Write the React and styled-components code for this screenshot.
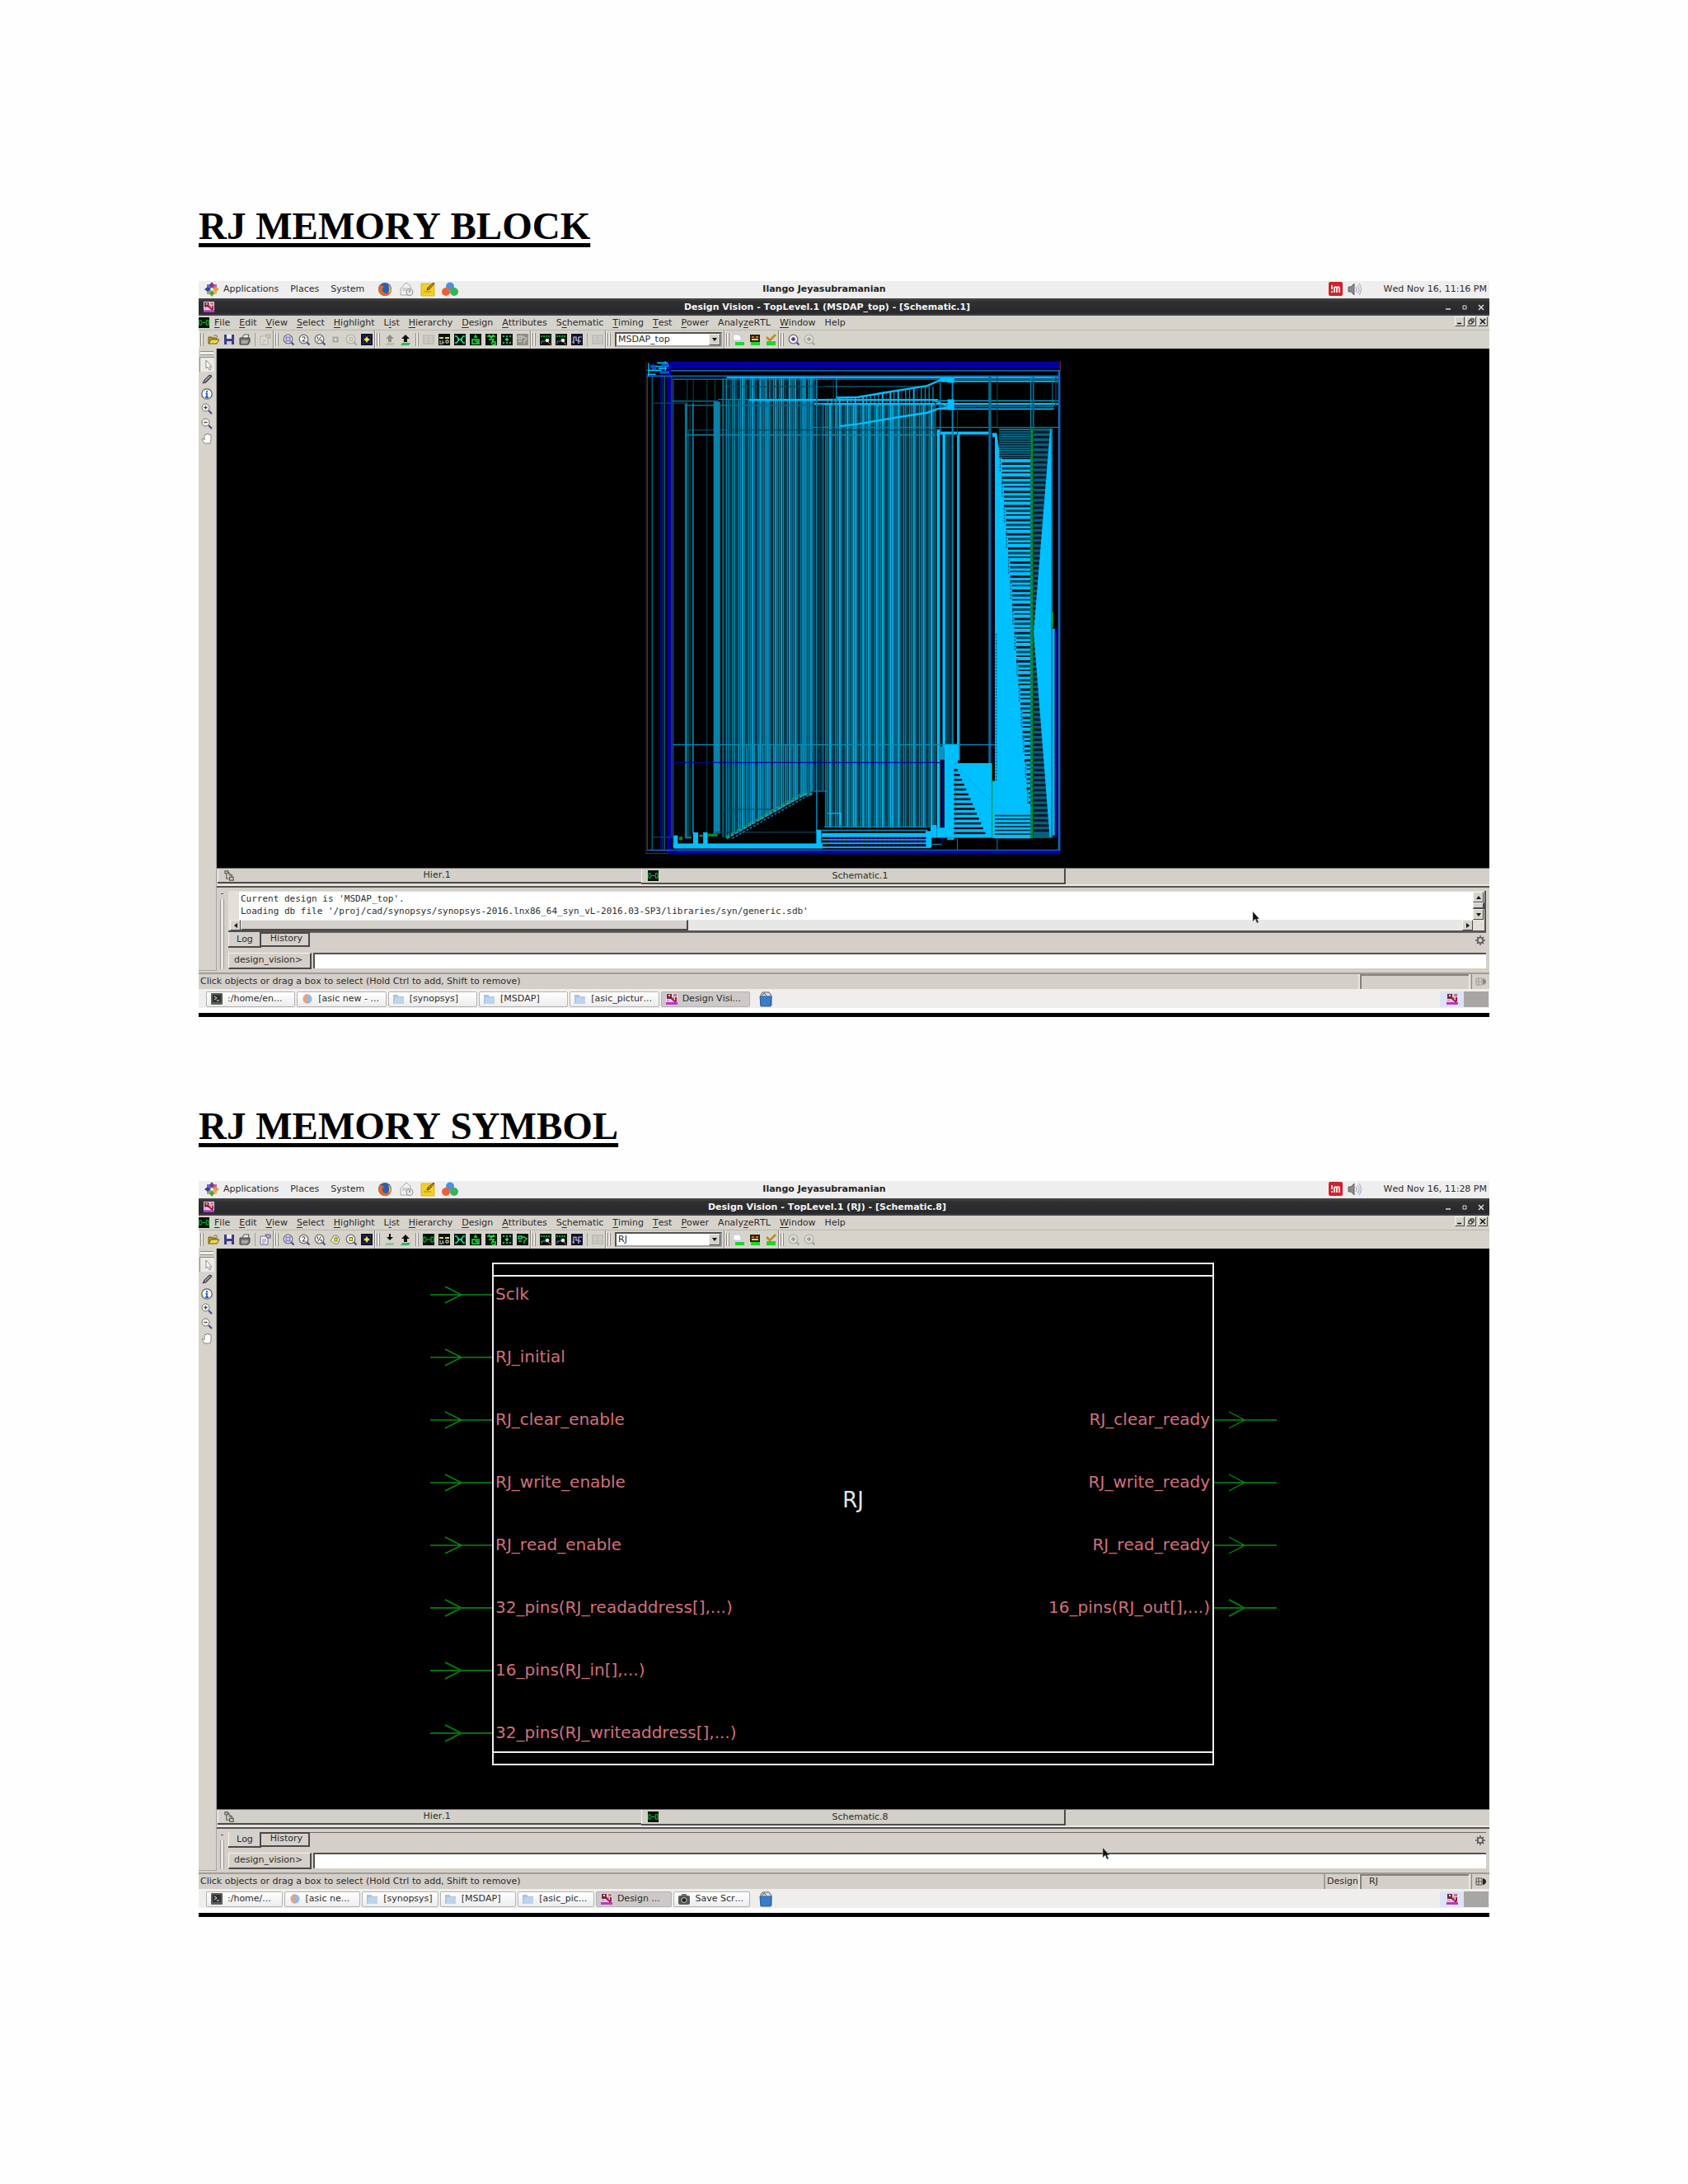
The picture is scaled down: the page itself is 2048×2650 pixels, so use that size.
import React, { useId, useState } from 'react';
import styled, { createGlobalStyle, css } from 'styled-components';

const GlobalStyle = createGlobalStyle`
  * {
    box-sizing: border-box;
  }

  body {
    margin: 0;
    background: #fefefe;
    font-kerning: none;
  }

  button, input, select {
    margin: 0;
    padding: 0;
    border: 0;
    background: none;
    color: inherit;
    font: inherit;
    font-kerning: none;
  }
`;

const Sheet = styled.main`
  padding: 246px 241px 200px;
`;

const Section = styled.section`
  margin-bottom: 104px;
`;

const Heading = styled.h1`
  margin: 0 0 39px;
  color: #000;
  font-family: "Liberation Serif", serif;
  font-size: 47px;
  font-weight: 700;
  line-height: 56px;
  text-decoration: underline;
  text-decoration-thickness: 5px;
  text-underline-offset: 5px;
`;

const Desktop = styled.div`
  position: relative;
  padding-bottom: 6px;
  border-bottom: 5px solid #000;
  color: #2c2c2c;
  font-family: "DejaVu Sans", sans-serif;
  font-size: 11px;
  line-height: 14px;
`;

const Svg = styled.svg`
  display: block;
  flex: none;
`;

const Panel = styled.header`
  display: grid;
  grid-template-columns: 1fr auto 1fr;
  align-items: center;
  height: 21px;
  padding-bottom: 2px;
  background: #efeeef;
`;

const PanelSide = styled.div`
  display: flex;
  align-items: center;
  justify-content: ${(props) => (props.$end ? 'flex-end' : 'flex-start')};
  gap: ${(props) => (props.$end ? '6px' : '8px')};
  padding: 0 3px 0 7px;
`;

const PanelMenus = styled.nav`
  display: flex;
  gap: 14px;
  margin: 0 8px 0 -3px;
`;

const UserName = styled.strong`
  padding-right: 48px;
  color: #222;
`;

const Clock = styled.time`
  margin-left: 20px;
`;

const TitleBar = styled.div`
  display: flex;
  align-items: center;
  height: 21px;
  padding-left: 6px;
  background: linear-gradient(#4a4a4a, #303031 20%, #29292b 85%, #454b50);
  color: #f4f4f4;
`;

const WindowTitle = styled.h2`
  flex: 1;
  margin: 0;
  font-size: 11px;
  text-align: center;
`;

const WindowButton = styled.button`
  display: grid;
  place-items: center;
  width: 20px;
  height: 18px;
`;

const MenuBar = styled.nav`
  display: flex;
  align-items: center;
  gap: 11px;
  height: 18px;
  padding-right: 2px;
  border-bottom: 1px solid #b9b6af;
  background: #d6d3cb;
`;

const MenuIcon = styled.span`
  margin-right: -5px;
`;

const MenuItem = styled.button`
  white-space: nowrap;
`;

const Mnemonic = styled.span`
  text-decoration: underline;
  text-underline-offset: 2px;
`;

const ChildButtons = styled.div`
  display: flex;
  gap: 2px;
  margin: 0 0 4px auto;
`;

const raised = css`
  border: 1px solid;
  border-color: #f4f3f0 #4c4a48 #4c4a48 #f4f3f0;
`;

const ChildButton = styled.button`
  ${raised}
  display: grid;
  place-items: center;
  width: 12px;
  height: 12px;
  background: #d6d3cb;
`;

const ToolBar = styled.div`
  display: flex;
  height: 22px;
  background: #d6d3cb;
`;

const ToolGroup = styled.div`
  display: flex;
  align-items: center;
  gap: 5px;
  padding: 0 2px;
  border-right: 1px solid #86847f;
  box-shadow: inset 1px 0 #f2f0ec;

  &:last-child {
    border-right: 0;
  }
`;

const Grip = styled.span`
  width: 4px;
  height: 16px;
  border: solid #8e8c87;
  border-width: 0 1px;
  background: #f1efeb;
`;

const Divider = styled.span`
  width: 1px;
  height: 16px;
  background: #a19f9a;
`;

const ToolButton = styled.button`
  display: block;
  opacity: ${(props) => (props.disabled ? 0.35 : 1)};
  filter: ${(props) => (props.disabled ? 'grayscale(1)' : 'none')};
`;

const Combo = styled.div`
  display: grid;
  grid-template-columns: 1fr 14px;
  align-items: stretch;
  width: 130px;
  height: 18px;
  border: 2px solid;
  border-color: #55534f #a3a19c #a3a19c #55534f;
  background: #fff;
`;

const ComboSelect = styled.select`
  grid-area: 1 / 1 / 2 / 3;
  appearance: none;
  padding-left: 2px;
  line-height: 14px;
`;

const ComboArrow = styled.span`
  ${raised}
  grid-area: 1 / 2 / 2 / 3;
  display: grid;
  place-items: center;
  background: #d6d3cb;
  pointer-events: none;
`;

const Workspace = styled.div`
  display: grid;
  grid-template-columns: 22px minmax(0, 1fr);
  background: #d4d0c9;
`;

const SideTools = styled.div`
  display: flex;
  flex-direction: column;
  align-items: center;
  margin-bottom: 2px;
  padding: 3px 1px 0 0;
  border-right: 1px solid #a8a6a0;
  border-bottom: 1px solid #a8a6a0;
  background: #d5d3ca;
`;

const SideGrip = styled.span`
  width: 16px;
  height: 5px;
  margin-bottom: 2px;
  border: solid #8e8c87;
  border-width: 1px 0;
  background: #f1efeb;
`;

const SideButton = styled.button`
  display: grid;
  place-items: center;
  width: 18px;
  height: 18px;
  ${(props) => props.$active && css`
    border: solid #8b8984;
    border-width: 1px 0 0 1px;
    background: #eceae7;
  `}
`;

const Canvas = styled.svg`
  display: block;
  width: 100%;
  height: auto;
  background: #000;
`;

const PinName = styled.text`
  fill: #d4707c;
  font-family: "DejaVu Sans", sans-serif;
  font-size: 20px;
`;

const BlockName = styled.text`
  fill: #e4e4e4;
  font-family: "DejaVu Sans", sans-serif;
  font-size: 26px;
`;

const ViewTabs = styled.div`
  display: grid;
  grid-template-columns: repeat(3, 1fr);
  align-items: start;
  height: 24px;
  padding-left: 1px;
  border-top: 1px solid #6c6a68;
  border-bottom: 2px solid #55534f;
  background: #d2d0c8;
  box-shadow: inset 0 -2px #eceae6;
`;

const ViewTab = styled.button`
  display: flex;
  align-items: center;
  height: ${(props) => (props.$active ? '19px' : '18px')};
  padding: 0 3px 0 8px;
  border: solid #4f4d4b;
  border-width: 0 ${(props) => (props.$active ? '2px' : '0')} 2px 0;
  box-shadow: inset 1px 0 #f4f3f0;
`;

const ViewTabLabel = styled.span`
  flex: 1;
  text-align: center;
`;

const Console = styled.div`
  display: grid;
  grid-template-columns: 14px minmax(0, 1fr);
  padding: 4px 4px 4px 0;
`;

const ConsoleGrip = styled.div`
  width: 5px;
  margin: 10px 0 0 4px;
  border: solid #9b9893;
  border-width: 0 1px;
  background: #ebe8e4;
  box-shadow: 0 -7px 0 -1px #d4d0c9, 0 -8px 0 -1px #55534f;
`;

const LogBox = styled.div`
  display: grid;
  grid-template-columns: minmax(0, 1fr) 14px;
  height: 50px;
  padding-top: 1px;
  border-right: 2px solid #55534f;
  border-bottom: 2px solid #55534f;
  background: #e3dfda;
`;

const LogText = styled.pre`
  height: 34px;
  margin: 0 0 0 13px;
  padding: 1px 2px;
  overflow: hidden;
  background: #fff;
  font-family: "DejaVu Sans Mono", monospace;
  font-size: 11px;
  line-height: 15px;
`;

const ScrollColumn = styled.div`
  display: grid;
  grid-template-rows: 13px 1fr 13px;
  height: 34px;
  background: #d6d3cb;
`;

const ScrollRow = styled.div`
  display: flex;
  height: 13px;
  margin-left: 2px;
  background: #e7e7e5;
`;

const ScrollArrow = styled.button`
  ${raised}
  display: grid;
  place-items: center;
  width: 13px;
  height: 13px;
  background: #d6d3cb;
`;

const ScrollThumb = styled.div`
  ${raised}
  width: ${(props) => props.$width || '100%'};
  margin-right: auto;
  border-right-width: 2px;
  border-bottom-width: 2px;
  background: #d4d0cb;
`;

const LogTabs = styled.div`
  display: flex;
  align-items: flex-start;
  height: 19px;
  margin-bottom: 6px;
  box-shadow: inset 0 1px #6c6a68;
`;

const LogTab = styled.button`
  height: ${(props) => (props.$active ? '19px' : '18px')};
  padding: 0 ${(props) => (props.$active ? '8px' : '7px')} 0 ${(props) => (props.$active ? '10px' : '11px')};
  border: solid #4c4a48;
  border-width: 0 2px 2px 0;
  background: #d4d0cb;
  box-shadow: ${(props) => (props.$active ? 'inset 1px 0 #f4f3f0' : 'inset 0 2px #4c4a48')};
`;

const GearButton = styled.button`
  margin: 3px 0 0 auto;
`;

const CommandRow = styled.div`
  display: flex;
  height: 20px;
`;

const CommandLabel = styled.label`
  ${raised}
  padding: 1px 9px 0 6px;
  border-right-width: 2px;
  border-bottom-width: 2px;
`;

const CommandInput = styled.input`
  flex: 1;
  min-width: 0;
  height: 19px;
  margin-left: 2px;
  padding-left: 4px;
  border: solid #55534f;
  border-width: 2px 0 0 2px;
  background: #fff;
`;

const StatusBar = styled.footer`
  display: flex;
  height: 20px;
  border-top: 2px solid #a09d98;
  background: #d4cfc9;
`;

const StatusText = styled.span`
  flex: 1;
  padding: 2px;
`;

const StatusLabel = styled.span`
  padding: 2px;
  border-left: 2px solid #a09d98;
`;

const StatusValue = styled.output`
  width: 132px;
  margin-right: 3px;
  padding: 0 9px;
  border: solid #85827e;
  border-width: 2px 0 0 2px;
  box-shadow: 1px 0 #f4f3f0, -2px 0 #e9e6e2;
`;

const StatusCorner = styled.span`
  display: grid;
  place-items: center;
  width: 22px;
  border-left: 1px solid #85827e;
`;

const TaskBar = styled.div`
  display: flex;
  align-items: center;
  height: 23px;
  padding: 1px 1px 0 9px;
  background: #efeeed;
`;

const TaskList = styled.div`
  display: flex;
  flex: 0 1 660px;
  gap: 2px;
  margin-right: 11px;
`;

const TaskButton = styled.button`
  display: flex;
  flex: 1 1 0;
  align-items: center;
  gap: 6px;
  min-width: 0;
  height: 19px;
  padding-left: 5px;
  border: 1px solid #b5b3b1;
  border-radius: 2px;
  background: ${(props) => (props.$active ? '#cdc9c8' : 'linear-gradient(#fff, #ececec)')};
  white-space: nowrap;
`;

const Pager = styled.div`
  display: grid;
  grid-template-columns: 29px 30px;
  height: 19px;
  margin-left: auto;
  background: #a8a6a5;
`;

const PagerDesk = styled.button`
  display: grid;
  place-items: center;
  background: #dbe4f4;
`;

const Pointer = styled.span`
  position: absolute;
  left: ${(props) => props.$left};
  top: ${(props) => props.$top};
  pointer-events: none;
`;

const GREEN = '#0fd03c';

const lens = (
  <>
    <circle cx="6.5" cy="6.5" r="5.3" fill="#f6f6f4" stroke="#6d6d75" strokeWidth="1.3" />
    <path d="M10.5 10.5 13.5 13.5" stroke="#4a46a0" strokeWidth="2" />
  </>
);

const board = <rect width="14" height="14" fill="#07120a" />;

// toolbar glyphs, all drawn on a 14 x 14 grid
const glyphs = {
  open: (
    <>
      <path d="M1 12V4h4l1 1h5v2" fill="#b79a2a" stroke="#6e5b12" />
      <path d="M1 12 4 7h10l-3 5z" fill="#ecd94f" stroke="#6e5b12" />
      <path d="M7 3q3-3 5 1" fill="none" stroke="#3d7a3d" />
    </>
  ),
  save: (
    <>
      <path d="M1 1h12v12H1z" fill="#3d3d86" />
      <path d="M4 1h6v5H4z" fill="#e8e8f4" />
      <path d="M4 9h6v4H4z" fill="#c9c9d8" />
    </>
  ),
  print: (
    <>
      <path d="M4 5 6 1h6l-1 4" fill="#eee" stroke="#555" />
      <path d="M1 5h12v5l-2 3H1z" fill="#777" stroke="#3e3e3e" />
      <path d="M3 9h8M3 11h7" stroke="#ddd" />
    </>
  ),
  props: (
    <>
      <path d="M1 3h9v10H1z" fill="#f1f1f6" stroke="#6a6a90" />
      <path d="M3 7h5M3 9h5M3 11h3" stroke="#8a8aae" />
      <path d="M7 1h6v4H9z" fill="#b9b9cf" stroke="#55557c" />
    </>
  ),
  zoomFull: (
    <>
      {lens}
      <rect x="4" y="4" width="5" height="5" fill="#c3c3f4" stroke="#5a55c8" />
    </>
  ),
  zoomTwo: (
    <>
      {lens}
      <path d="M5 5q0-1.500 1.500-1.500T8 5q0 1-3 4h3.500" fill="none" stroke="#333" />
    </>
  ),
  zoomHalf: (
    <>
      {lens}
      <path d="M4.500 3.500v3M8.500 3.500l-4 6M7.500 7.500h1.500v2" fill="none" stroke="#333" />
    </>
  ),
  zoomPan: (
    <>
      <path d="M3 6 5 2l5 1 2 4-2 5H6L1 8z" fill="#f6f6d8" stroke="#777" />
      <rect x="6" y="5" width="3" height="4" fill="#ece34b" stroke="#77731d" />
    </>
  ),
  zoomPanOff: <rect x="4.500" y="4.500" width="5" height="5" fill="#eee" stroke="#555" strokeWidth="2" />,
  zoomSelected: (
    <>
      {lens}
      <rect x="5" y="4.500" width="3.500" height="4" fill="#ece34b" stroke="#77731d" />
    </>
  ),
  highlight: (
    <>
      <rect width="14" height="14" fill="#11112e" />
      <path d="M2 3h10M2 11h10M3 2v10M11 2v10" stroke="#5454a0" strokeDasharray="1 2" />
      <path d="m7 3 1.500 2.500L11 7 8.500 8.500 7 11 5.500 8.500 3 7l2.500-1.500z" fill="#f5ee2a" />
    </>
  ),
  push: (
    <>
      <path d="M3 11h10l-2 3H1z" fill="#8fc79a" />
      <path d="M7 8 3 4h3V0h2v4h3z" fill="#101010" />
    </>
  ),
  pop: (
    <>
      <path d="M3 11h10l-2 3H1z" fill="#35b455" />
      <path d="M7 1 12 6H9v4H5V6H2z" fill="#101010" />
    </>
  ),
  gate: (
    <>
      {board}
      <path d="M1 4h2q3 3 0 6H1zM5 7h4M10 4h3v6h-3z" fill="none" stroke={GREEN} />
    </>
  ),
  bus: (
    <>
      {board}
      <path d="M1 4h5v2H1zM8 4h5v2H8z" fill="#f1d64a" />
      <path d="M2 8v3M5 8v3h2M9 8h3v3H9zM1 12h4" fill="none" stroke="#d9e8dc" />
    </>
  ),
  cross: (
    <>
      {board}
      <path d="M1 3h2l3 4-3 4H1M13 3h-2L8 7l3 4h2M4 7h6" fill="none" stroke="#29e0a0" strokeWidth="1.400" />
    </>
  ),
  fanIn: (
    <>
      {board}
      <path d="M7 1v3M5 4h4M3 7h8v5H3zM6 9h3v3" fill="none" stroke="#18e838" strokeWidth="1.500" />
    </>
  ),
  fanOut: (
    <>
      {board}
      <path d="M2 3h10M4 1l3 4 3-4M4 7h6l-3 5M9 10h3v3H8" fill="none" stroke="#18e838" strokeWidth="1.500" />
    </>
  ),
  path: (
    <>
      {board}
      <path d="M2 3h2M6 3h2M10 3h2M7 5v4M5 7h4M2 11h2M6 11h2M10 11h2" stroke="#4ae08a" strokeWidth="1.300" />
    </>
  ),
  tree: (
    <>
      {board}
      <path d="M2 3h4v3H2zM2 9h4M6 4h3l3 2-3 3v3" fill="none" stroke="#28d060" strokeWidth="1.300" />
    </>
  ),
  timing: (
    <>
      {board}
      <path d="M1 3h12" stroke={GREEN} strokeWidth="1.500" strokeDasharray="2 1" />
      <path d="M2 12V9h4l2-2" fill="none" stroke="#5c7be0" />
      <circle cx="9" cy="8" r="2.300" fill="#dfe9f4" />
      <path d="m10 10 3 3" stroke="#d87878" />
    </>
  ),
  wave: (
    <>
      <rect width="14" height="14" fill="#11112e" />
      <path d="M1 10h2V4h3v4h3V4h4M3 12V7M9 12V9h3" fill="none" stroke="#c9c9ea" strokeWidth="1.200" />
    </>
  ),
  list: (
    <>
      <path d="M0 1h14v12H0z" fill="#999" />
      <path d="M2 4h4M8 4h4M2 7h4M8 7h4M2 10h4M8 10h4" stroke="#eee" />
    </>
  ),
  newDesign: (
    <>
      <path d="M0 1h7l2 3v4H0z" fill="#fff" stroke="#c3bff0" />
      <path d="M2 10h11v4H2z" fill="#1fd52f" />
    </>
  ),
  linkDesign: (
    <>
      <path d="M1 1h12v9H1z" fill="#25250d" />
      <path d="M3 3h3v2H3zM8 3h3v2H8z" fill="#e7642b" />
      <path d="M3 7h8" stroke="#e3d33c" strokeWidth="2" />
      <path d="M2 10h11v4H2z" fill="#1fd52f" />
    </>
  ),
  checkDesign: (
    <>
      <path d="m2 4 4 4 7-7" fill="none" stroke="#c08b15" strokeWidth="2.500" />
      <path d="M2 9h11v5H2z" fill="#1fd52f" />
    </>
  ),
  back: (
    <>
      {lens}
      <path d="M4 6.500h5M6.500 4v5" stroke="#5c1e9e" strokeWidth="2" />
    </>
  ),
  arrow: <path d="M5 1v10l2-2 2 4 2-1-2-3h3z" fill="#fff" stroke="#8d8d8d" />,
  pencil: (
    <>
      <path d="M2 12 4 8l6-6 3 1-1 2-6 6z" fill="#71717f" stroke="#3f3f4a" />
      <path d="M5 9 10 4" stroke="#b5b5cc" />
    </>
  ),
  info: (
    <>
      <circle cx="7" cy="7" r="6.200" fill="#fbfcff" stroke="#5b6068" strokeWidth="1.300" />
      <path d="M7 3v2M5.500 6.500H7V11M5 11h4" fill="none" stroke="#1d66dd" strokeWidth="1.800" />
    </>
  ),
  zoomIn: (
    <>
      <circle cx="5.500" cy="5.500" r="4.500" fill="#f0f0ec" stroke="#74747a" />
      <path d="M3.500 5.500h4M5.500 3.500v4" stroke="#444" strokeWidth="1.300" />
      <path d="m9 9 4 4" stroke="#4a46a0" strokeWidth="2" />
    </>
  ),
  zoomOut: (
    <>
      <circle cx="5.500" cy="5.500" r="4.500" fill="#f0f0ec" stroke="#74747a" />
      <path d="M3.500 5.500h4" stroke="#444" strokeWidth="1.300" />
      <path d="m9 9 4 4" stroke="#4a46a0" strokeWidth="2" />
    </>
  ),
  hand: (
    <path
      d="M4 13 1 8l1-1 2 2V3l1-1 1 1 1-2 1 1 1-1 1 2 1-1 1 1v6l-1 4z"
      fill="#fff"
      stroke="#8a8a8a"
    />
  ),
  terminal: (
    <>
      <rect width="14" height="14" rx="1" fill="#5a5d5a" />
      <rect x="2" y="2" width="10" height="9" fill="#2e332f" />
      <path d="m4 4 3 2-3 2M7 9h3" fill="none" stroke="#e5e5e5" />
    </>
  ),
  browser: (
    <>
      <circle cx="7" cy="7" r="5.500" fill="#8fbbe0" />
      <path d="M6 1Q1 3 2 9q2 5 7 3-4-1-3-5 0-3 2-5z" fill="#eba07c" />
    </>
  ),
  folder: (
    <>
      <path d="M0 2h6v2h7v9H0z" fill="#a8c5e2" />
      <path d="M2 5h11v8H1z" fill="#bcd4ec" />
    </>
  ),
  designVision: (
    <>
      <rect width="14" height="14" fill="#f0cde4" />
      <path d="M1 1h6v6H1z" fill="#6d2c40" />
      <path d="M3 2h2v2H3z" fill="#f4dfe4" />
      <path d="M9 1h4v3H9zM7 5h3v2H7z" fill="#b9798c" />
      <path d="m6 6 6 5M12 5v5" fill="none" stroke="#a01838" strokeWidth="2" />
      <path d="M1 8h3v2H1z" fill="#d9a0cf" />
      <path d="M0 11h14v3H0z" fill="#b53ac4" />
    </>
  ),
  camera: (
    <>
      <path d="M4 1h6v3H4z" fill="#777" />
      <rect y="3" width="14" height="11" rx="2" fill="#555a55" />
      <circle cx="7" cy="8.500" r="3" fill="#222" stroke="#c2c2c2" />
    </>
  ),
  hierarchy: (
    <path
      d="M1 1h4v3H1zM3 4v7h3M6 6h4v3M7 9h5v4H7zM5 2l3 3"
      fill="none"
      stroke="#55534f"
      strokeWidth="1.200"
    />
  ),
  gear: (
    <>
      <circle cx="7" cy="7" r="3.200" fill="none" stroke="#55555a" strokeWidth="1.600" />
      <path
        d="M7 1v2M7 11v2M1 7h2M11 7h2M3 3l1.500 1.500M9.500 9.500 11 11M3 11l1.500-1.500M9.500 4.500 11 3"
        stroke="#55555a"
        strokeWidth="1.500"
      />
    </>
  ),
};

function Glyph({ name, size = 14 }) {
  return (
    <Svg width={size} height={size} viewBox="0 0 14 14" aria-hidden="true">
      {glyphs[name]}
    </Svg>
  );
}

function Triangle({ d }) {
  return (
    <Svg width="6" height="6" viewBox="0 0 6 6" aria-hidden="true">
      <path d={d} fill="#111" />
    </Svg>
  );
}

function DistroLogo() {
  const petals = ['#9b2d8f', '#e0a42a', '#5b9c34', '#3a3f9c'];
  return (
    <Svg width="18" height="18" viewBox="0 0 18 18" aria-hidden="true">
      {petals.map((fill, i) => (
        <g key={fill} transform={`rotate(${i * 90} 9 9)`}>
          <path d="M9 8 6 4l3-4 3 4z" fill={fill} />
          <path d="M10 8V3h5v5z" fill={fill} opacity="0.7" />
        </g>
      ))}
      <circle cx="9" cy="9" r="1.500" fill="#fff" />
    </Svg>
  );
}

function Launchers() {
  return (
    <>
      <Svg width="18" height="18" viewBox="0 0 18 18" aria-hidden="true">
        <circle cx="9" cy="9" r="8" fill="#2b5fae" />
        <path d="M3 3Q0 8 2 12q3 6 9 5 6-2 6-8-2 5-7 5-5-1-4-6 1-2 3-2Q5 5 3 3z" fill="#e8641f" />
        <path d="M13 3q5 4 3 9l-3 2q2-5 0-11z" fill="#f2b233" />
      </Svg>
      <Svg width="18" height="18" viewBox="0 0 18 18" aria-hidden="true">
        <path d="M2 8 9 1l5 4v11H2z" fill="#f0f0f0" stroke="#a8a8a8" />
        <path d="M4 8h8M4 10h5" stroke="#b3b3b3" />
        <circle cx="13" cy="12.500" r="4" fill="#ececf0" stroke="#8a8a92" />
        <path d="M13 10v3" stroke="#55555a" />
      </Svg>
      <Svg width="18" height="18" viewBox="0 0 18 18" aria-hidden="true">
        <path d="M1 2h16v15H1z" fill="#f2cf28" stroke="#d8b31a" />
        <path d="M4 12h9" stroke="#a98b13" />
        <path d="m8 10 1-3 7-6 1 1-6 7z" fill="#b98a4a" stroke="#5d4420" />
      </Svg>
      <Svg width="20" height="18" viewBox="0 0 20 18" aria-hidden="true">
        <circle cx="10" cy="5.500" r="5" fill="#4d8fe0" />
        <circle cx="5" cy="12" r="5" fill="#ee6034" />
        <circle cx="15" cy="12" r="5" fill="#35b45a" />
      </Svg>
    </>
  );
}

function TrayIcons() {
  return (
    <>
      <Svg width="17" height="17" viewBox="0 0 17 17" aria-hidden="true">
        <rect width="17" height="17" rx="2" fill="#d3202a" />
        <path d="M4 4v5M4 11v2M7 13V6M7 7q3-2 3 1v5M10 7q3-2 3 1v5" fill="none" stroke="#fff" strokeWidth="1.700" />
      </Svg>
      <Svg width="18" height="16" viewBox="0 0 18 16" aria-hidden="true">
        <path d="M1 5h3l4-4v14l-4-4H1z" fill="#8b8b8b" stroke="#666" />
        <path d="M10 5q2 3 0 6M12 3q4 5 0 10M14 1q5 7 0 14" fill="none" stroke="#a7b3cc" strokeWidth="1.200" />
      </Svg>
    </>
  );
}

const CYAN = '#00bfff';
const MID = '#0785ad';
const DIM = '#06465a';
const NAVY = '#0000a4';
const BLUE = '#1263c4';

// [x, y, width, height, fill]
const frameBars = [
  [40, 45, 3, 1465, '#4a2414'], [44, 90, 3, 1410, '#1c5561'], [61, 90, 4, 1410, '#0c6285'],
  [92, 60, 4, 1440, NAVY], [98, 60, 3, 1440, '#10306a'], [105, 90, 4, 1410, '#0c6285'],
  [116, 60, 14, 1445, NAVY], [130, 90, 5, 1370, '#3a2488'], [137, 95, 3, 1395, BLUE],
  [125, 45, 1403, 21, NAVY], [130, 71, 1392, 4, BLUE], [44, 87, 1476, 4, BLUE],
  [1520, 70, 8, 1432, BLUE], [1527, 45, 3, 30, '#7a3414'],
  [45, 1497, 1483, 4, BLUE], [120, 1501, 1408, 10, NAVY], [40, 1507, 80, 3, '#5a2a14'],
];

const railBars = [
  [330, 91, 1190, 5, CYAN], [140, 97, 1380, 3, MID], [1100, 102, 420, 5, CYAN],
  [320, 119, 740, 3, DIM], [135, 162, 165, 3, MID], [62, 168, 120, 3, DIM],
  [300, 157, 110, 3, MID], [410, 157, 680, 6, CYAN], [1090, 161, 430, 3, CYAN],
  [180, 174, 460, 4, '#0a6888'], [645, 169, 875, 6, CYAN], [1090, 178, 415, 3, MID],
  [1095, 185, 410, 4, CYAN], [635, 240, 885, 3, MID], [190, 248, 895, 3, DIM],
  [190, 262, 895, 4, MID], [1085, 254, 195, 9, CYAN],
  [187, 95, 3, 1365, DIM], [209, 95, 3, 80, DIM], [180, 170, 9, 1290, '#087295'],
  [192, 250, 2, 1210, MID], [197, 170, 3, 1290, DIM], [207, 170, 5, 1280, MID],
  [258, 95, 3, 1355, DIM], [287, 95, 3, 70, DIM], [283, 165, 24, 1285, '#0782a8'],
  [315, 95, 4, 1365, MID], [321, 95, 3, 1365, DIM], [327, 95, 5, 1365, MID],
  [634, 240, 3, 1085, MID], [651, 95, 5, 1345, '#0c7aa0'], [660, 172, 4, 1150, DIM], [667, 172, 4, 1150, DIM],
  [674, 172, 4, 1150, MID], [712, 95, 3, 150, DIM], [722, 95, 4, 150, MID],
  [1078, 165, 4, 1270, DIM], [1085, 248, 11, 1185, CYAN], [1105, 255, 10, 945, CYAN],
  [1095, 91, 4, 170, MID], [1118, 262, 9, 925, '#06465a'], [1129, 262, 4, 925, DIM],
  [1138, 91, 6, 1095, MID], [1157, 262, 10, 970, '#05b0eb'], [1157, 175, 3, 90, DIM],
  [1270, 91, 10, 1150, '#066b8e'], [1279, 262, 4, 980, NAVY], [1300, 91, 3, 155, DIM],
  [1420, 91, 4, 155, MID], [1428, 91, 6, 155, '#0c6285'], [1498, 91, 3, 95, MID], [1510, 91, 4, 90, DIM],
  [138, 1184, 1155, 3, '#078fb9'], [138, 1237, 965, 3, NAVY], [320, 1376, 170, 3, DIM],
  [290, 1444, 362, 3, DIM], [640, 1322, 52, 3, MID], [692, 1388, 50, 3, CYAN], [737, 1388, 4, 36, CYAN],
  [1103, 1238, 3, 242, NAVY], [1157, 1465, 3, 32, MID], [1300, 1465, 3, 32, MID],
];

const footBars = [
  [60, 1459, 80, 3, DIM], [140, 1455, 15, 38, CYAN], [210, 1446, 18, 45, CYAN], [246, 1446, 16, 45, CYAN],
  [140, 1479, 535, 15, CYAN], [160, 1459, 12, 10, '#078d2a'], [232, 1453, 14, 6, '#078d2a'],
  [262, 1450, 36, 8, '#078d2a'], [180, 1459, 24, 5, MID], [652, 1438, 18, 50, CYAN],
  [680, 1428, 370, 3, MID], [672, 1438, 380, 4, '#0d90bd'], [672, 1448, 400, 12, CYAN],
  [672, 1466, 390, 4, '#21a8d8'], [672, 1476, 390, 5, '#21a8d8'], [672, 1488, 390, 5, '#21a8d8'],
  [1044, 1442, 22, 48, CYAN], [1062, 1424, 22, 38, CYAN], [1084, 1432, 30, 30, CYAN],
  [1066, 1480, 36, 3, MID], [1092, 1190, 20, 40, '#0d90bd'],
  [1112, 1184, 48, 278, CYAN], [1122, 1462, 24, 6, CYAN], [1157, 1240, 126, 222, CYAN],
  [1281, 1240, 3, 222, '#078d2a'], [1284, 1293, 12, 170, CYAN],
];

// brightness of the wires from left to right, repeated over a bundle
const WIRE_PATTERN = 'mdmmdmmbmdmmbmdmbmmbbmdmbmmbmdmbmmbmdmbbmmb';
const wireFill = { b: '#05aee6', m: '#078cb6', d: DIM };

function wires(from, to, step, offset = 0) {
  const out = [];
  for (let x = from, i = offset; x < to; x += step, i += 1) {
    out.push({ x, shade: WIRE_PATTERN[i % WIRE_PATTERN.length], i });
  }
  return out;
}

const slopeAt = (x) => 1462 - (x - 330) * 0.45;

function TopLevelSchematic() {
  return (
    <Canvas viewBox="0 0 1544 630" role="img" aria-label="MSDAP_top schematic">
      <g transform="translate(507 -3) scale(0.338 0.408)">
        {frameBars.map(([x, y, w, h, fill], i) => (
          <rect key={i} x={x} y={y} width={w} height={h} fill={fill} />
        ))}
        <path d="M46 72h50M46 84h30M50 50v40M66 55v20M72 60h50M80 50h40M85 66h30M110 45v30" stroke={CYAN} strokeWidth="4" />
        <path d="M56 60h20M90 78h34M64 66h14M96 56h28" stroke="#0a50e0" strokeWidth="8" />

        <path d="M335 97H650V1320L335 1460Z" fill="#02202b" />
        <rect x="656" y="172" width="26" height="1150" fill="#021820" />
        <rect x="682" y="172" width="400" height="1260" fill="#02222d" />
        <rect x="1112" y="262" width="30" height="922" fill="#021c26" />

        {wires(336, 650, 7).map(({ x, shade, i }) => (
          <rect key={x} x={x} y={i % 5 ? 95 : 160} width={shade === 'b' ? 5 : 4} height={slopeAt(x) - (i % 5 ? 95 : 160)} fill={wireFill[shade]} />
        ))}
        {wires(372, 610, 14, 3).map(({ x }) => (
          <rect key={x} x={x} y="1185" width="4" height={slopeAt(x) - 1185} fill="#0993bf" />
        ))}
        {wires(684, 1078, 7, 5).map(({ x, shade, i }) => (
          <rect key={x} x={x} y={i % 2 ? 172 : 122} width={shade === 'b' ? 6 : 4} height={i % 2 ? 1260 : 1310} fill={wireFill[shade]} />
        ))}
        <path d="M684 122H1050L770 155H684Z" fill="#000" />
        <path d="M684 119H1060" stroke={DIM} strokeWidth="3" />

        {railBars.map(([x, y, w, h, fill], i) => (
          <rect key={i} x={x} y={y} width={w} height={h} fill={fill} />
        ))}
        <path d="M725 153 800 152 900 138 1050 118 1100 100 1145 98" fill="none" stroke={CYAN} strokeWidth="6" />
        <path d="M735 238 800 232 940 212 1050 198 1090 186 1145 182" fill="none" stroke={CYAN} strokeWidth="6" />
        <path d="M1085 92 1145 105M1070 160 1140 185M1125 95h20v12h-20zM1125 160h20v28h-20z" stroke={CYAN} strokeWidth="4" fill={CYAN} />

        <path d="M326 1460 600 1330H638" fill="none" stroke="#0aa04a" strokeWidth="4" strokeDasharray="16 6" />
        <path d="M330 1464 606 1334H638" fill="none" stroke="#08a6dc" strokeWidth="5" strokeDasharray="12 5" />
        <path d="M350 1464 632 1332" fill="none" stroke={MID} strokeWidth="4" strokeDasharray="8 6" />

        {footBars.map(([x, y, w, h, fill], i) => (
          <rect key={i} x={x} y={y} width={w} height={h} fill={fill} />
        ))}
        <path d="M700 1463H1050M700 1473H1050M700 1485H1050" stroke={NAVY} strokeWidth="5" strokeDasharray="10 6" />
        {Array.from({ length: 14 }, (_, i) => (
          <rect key={i} x="1146" y={1258 + i * 14.4} width={14 + i * 7.6} height="6" fill="#00060a" />
        ))}
        <path d="M1152 1240V1462" stroke="#0a8a8a" strokeWidth="4" strokeDasharray="4 10" />
        <path d="M1170 1262 1275 1350" stroke="#0785ad" strokeWidth="2" strokeDasharray="5 6" />

        <rect x="1308" y="245" width="114" height="85" fill="#067092" />
        <path d="M1284 258H1300L1312 330H1422V1464H1293V270H1284Z" fill={CYAN} />
        {Array.from({ length: 74 }, (_, i) => {
          const y = 332 + i * 14;
          const x = 1318 + Math.floor(i / 5.4) * 7.4;
          return <rect key={i} x={x} y={y} width={1420 - x} height={i % 3 ? 7 : 4} fill={i % 3 === 2 ? '#034055' : '#02141c'} />;
        })}
        {Array.from({ length: 14 }, (_, i) => (
          <path key={i} d={`M${1312 + i * 7.6} ${322 + i * 76}v52`} stroke="#04384a" strokeWidth="3" strokeDasharray="5 4" />
        ))}
        {Array.from({ length: 12 }, (_, i) => (
          <rect key={i} x="1308" y={250 + i * 7} width="112" height="3" fill="#02141c" />
        ))}
        {Array.from({ length: 6 }, (_, i) => (
          <rect key={i} x="1293" y={1394 + i * 11} width="127" height="4" fill="#02202b" />
        ))}
        <path d="M1298 855V1292" stroke="#033a4c" strokeWidth="3" strokeDasharray="5 4" />

        <rect x="1432" y="245" width="64" height="1217" fill={CYAN} />
        <path d="M1432 245H1492L1432 850Z" fill="#05607c" />
        <path d="M1432 850 1490 1462H1432Z" fill="#05607c" />
        {Array.from({ length: 80 }, (_, i) => {
          const y = 252 + i * 15;
          const width = y < 850 ? 58 * (1 - (y - 245) / 605) : 58 * ((y - 850) / 612);
          return <rect key={i} x="1432" y={y} width={width} height="7" fill="#021923" />;
        })}
        <rect x="1422" y="245" width="9" height="1219" fill="#067a34" />
        <path d="M1426 250V1460" stroke="#0aa82c" strokeWidth="4" strokeDasharray="7 7" />
        <rect x="1496" y="245" width="4" height="1217" fill="#0a7fb8" />
        <rect x="1497" y="790" width="6" height="45" fill="#0a9a1c" />
        <rect x="1500" y="840" width="8" height="615" fill="#0aaee8" />
        <rect x="1509" y="840" width="7" height="622" fill={NAVY} />
      </g>
    </Canvas>
  );
}

const inputPins = [
  { name: 'Sclk' },
  { name: 'RJ_initial' },
  { name: 'RJ_clear_enable' },
  { name: 'RJ_write_enable' },
  { name: 'RJ_read_enable' },
  { name: '32_pins(RJ_readaddress[],...)', bus: true },
  { name: '16_pins(RJ_in[],...)', bus: true },
  { name: '32_pins(RJ_writeaddress[],...)', bus: true },
];

const outputPins = [
  { name: 'RJ_clear_ready' },
  { name: 'RJ_write_ready' },
  { name: 'RJ_read_ready' },
  { name: '16_pins(RJ_out[],...)', bus: true },
];

const wireProps = (pin) => ({
  fill: 'none',
  stroke: pin.bus ? '#06700c' : '#078a0c',
  strokeWidth: pin.bus ? 2 : 1.4,
});

function SymbolSchematic() {
  return (
    <Canvas viewBox="0 0 1544 680" role="img" aria-label="RJ symbol">
      <path d="M335 18H1209V626H335ZM335 33H1209M335 611H1209" fill="none" stroke="#f0eef0" strokeWidth="2" />
      {inputPins.map((pin, i) => {
        const y = 56 + i * 76;
        return (
          <g key={pin.name}>
            <path d={`M259 ${y}H334M277 ${y - 10}L297 ${y}L277 ${y + 10}`} {...wireProps(pin)} />
            <PinName x="338" y={y + 6}>{pin.name}</PinName>
          </g>
        );
      })}
      {outputPins.map((pin, i) => {
        const y = 208 + i * 76;
        return (
          <g key={pin.name}>
            <path d={`M1210 ${y}H1286M1228 ${y - 10}L1247 ${y}L1228 ${y + 10}`} {...wireProps(pin)} />
            <PinName x="1205" y={y + 6} textAnchor="end">{pin.name}</PinName>
          </g>
        );
      })}
      <BlockName x="772" y="314" textAnchor="middle">RJ</BlockName>
    </Canvas>
  );
}

// the underscore stands before the mnemonic letter
const menus = [
  '_File', '_Edit', '_View', '_Select', '_Highlight', 'L_ist', '_Hierarchy', '_Design', '_Attributes',
  'S_chematic', '_Timing', '_Test', '_Power', 'Analy_zeRTL', '_Window', 'Help',
];

function Menus() {
  return menus.map((menu) => {
    const at = menu.indexOf('_');
    if (at < 0) return <MenuItem key={menu}>{menu}</MenuItem>;
    return (
      <MenuItem key={menu}>
        {menu.slice(0, at)}
        <Mnemonic>{menu[at + 1]}</Mnemonic>
        {menu.slice(at + 2)}
      </MenuItem>
    );
  });
}

function Tool({ name, off }) {
  return (
    <ToolButton aria-label={name} disabled={off}>
      <Glyph name={name} />
    </ToolButton>
  );
}

function Tools({ design, symbol }) {
  return (
    <ToolBar>
      <ToolGroup>
        <Grip />
        <Tool name="open" />
        <Tool name="save" />
        <Tool name="print" />
        <Divider />
        <Tool name="props" off={!symbol} />
      </ToolGroup>
      <ToolGroup>
        <Grip />
        <Tool name="zoomFull" />
        <Tool name="zoomTwo" />
        <Tool name="zoomHalf" />
        <Tool name={symbol ? 'zoomPan' : 'zoomPanOff'} off={!symbol} />
        <Tool name="zoomSelected" off={!symbol} />
        <Tool name="highlight" />
      </ToolGroup>
      <ToolGroup>
        <Grip />
        <Tool name={symbol ? 'push' : 'pop'} off={!symbol} />
        <Tool name="pop" />
        <Grip />
        {symbol ? <Tool name="gate" /> : <Tool name="list" off />}
        <Tool name="bus" />
        <Tool name="cross" />
        <Tool name="fanIn" />
        <Tool name="fanOut" />
        <Tool name="path" />
        <Tool name="tree" off={!symbol} />
      </ToolGroup>
      <ToolGroup>
        <Grip />
        <Tool name="timing" />
        <Tool name="timing" />
        <Tool name="wave" />
        <Divider />
        <Tool name="list" off />
      </ToolGroup>
      <ToolGroup>
        <Grip />
        <Combo>
          <ComboSelect aria-label="Current design" defaultValue={design}>
            <option>{design}</option>
          </ComboSelect>
          <ComboArrow>
            <Triangle d="M0 1h6L3 5z" />
          </ComboArrow>
        </Combo>
      </ToolGroup>
      <ToolGroup>
        <Grip />
        <Tool name="newDesign" />
        <Tool name="linkDesign" />
        <Tool name="checkDesign" />
      </ToolGroup>
      <ToolGroup>
        <Grip />
        <Tool name="back" off={symbol} />
        <Tool name="back" off />
      </ToolGroup>
    </ToolBar>
  );
}

function Log({ lines }) {
  return (
    <LogBox>
      <LogText>{lines.join('\n')}</LogText>
      <ScrollColumn>
        <ScrollArrow aria-label="Scroll up"><Triangle d="M0 5h6L3 1z" /></ScrollArrow>
        <ScrollThumb />
        <ScrollArrow aria-label="Scroll down"><Triangle d="M0 1h6L3 5z" /></ScrollArrow>
      </ScrollColumn>
      <ScrollRow>
        <ScrollArrow aria-label="Scroll left"><Triangle d="M5 0v6L1 3z" /></ScrollArrow>
        <ScrollThumb $width="36%" />
        <ScrollArrow aria-label="Scroll right"><Triangle d="M1 0v6l4-3z" /></ScrollArrow>
      </ScrollRow>
    </LogBox>
  );
}

const sideTools = ['arrow', 'pencil', 'info', 'zoomIn', 'zoomOut', 'hand'];

function DesignVision({ design, title, time, view, symbol, log, tasks, status, pointer, children }) {
  const commandId = useId();
  const [command, setCommand] = useState('');

  return (
    <Desktop>
      <Panel>
        <PanelSide>
          <DistroLogo />
          <PanelMenus>
            <MenuItem>Applications</MenuItem>
            <MenuItem>Places</MenuItem>
            <MenuItem>System</MenuItem>
          </PanelMenus>
          <Launchers />
        </PanelSide>
        <UserName>Ilango Jeyasubramanian</UserName>
        <PanelSide $end>
          <TrayIcons />
          <Clock>{time}</Clock>
        </PanelSide>
      </Panel>

      <TitleBar>
        <Glyph name="designVision" size={13} />
        <WindowTitle>{title}</WindowTitle>
        <WindowButton aria-label="Minimize">
          <Svg width="8" height="8" viewBox="0 0 8 8"><path d="M1 6h6" stroke="#ddd" strokeWidth="1.500" /></Svg>
        </WindowButton>
        <WindowButton aria-label="Maximize">
          <Svg width="8" height="8" viewBox="0 0 8 8"><path d="M2 2h4v4H2z" fill="none" stroke="#ddd" /></Svg>
        </WindowButton>
        <WindowButton aria-label="Close">
          <Svg width="8" height="8" viewBox="0 0 8 8"><path d="m1 1 6 6M7 1 1 7" stroke="#ddd" strokeWidth="1.500" /></Svg>
        </WindowButton>
      </TitleBar>

      <MenuBar>
        <MenuIcon><Glyph name="gate" size={13} /></MenuIcon>
        <Menus />
        <ChildButtons>
          <ChildButton aria-label="Minimize view">
            <Svg width="8" height="8" viewBox="0 0 8 8"><path d="M1 6.500h5" stroke="#111" strokeWidth="1.500" /></Svg>
          </ChildButton>
          <ChildButton aria-label="Restore view">
            <Svg width="8" height="8" viewBox="0 0 8 8"><path d="M3 3V1h4v4H5M1 3h4v4H1z" fill="none" stroke="#111" /></Svg>
          </ChildButton>
          <ChildButton aria-label="Close view">
            <Svg width="8" height="8" viewBox="0 0 8 8"><path d="m1 1 6 6M7 1 1 7" stroke="#111" strokeWidth="1.500" /></Svg>
          </ChildButton>
        </ChildButtons>
      </MenuBar>

      <Tools design={design} symbol={symbol} />

      <Workspace>
        <SideTools>
          <SideGrip />
          {sideTools.map((name) => (
            <SideButton key={name} aria-label={name} $active={name === 'arrow'}>
              <Glyph name={name} />
            </SideButton>
          ))}
        </SideTools>
        <div>
          {children}
          <ViewTabs>
            <ViewTab>
              <Glyph name="hierarchy" size={13} />
              <ViewTabLabel>Hier.1</ViewTabLabel>
            </ViewTab>
            <ViewTab $active>
              <Glyph name="gate" size={13} />
              <ViewTabLabel>{view}</ViewTabLabel>
            </ViewTab>
          </ViewTabs>
          <Console>
            <ConsoleGrip />
            <div>
              {log && <Log lines={log} />}
              <LogTabs>
                <LogTab $active>Log</LogTab>
                <LogTab>History</LogTab>
                <GearButton aria-label="Console settings">
                  <Glyph name="gear" />
                </GearButton>
              </LogTabs>
              <CommandRow>
                <CommandLabel htmlFor={commandId}>design_vision&gt;</CommandLabel>
                <CommandInput id={commandId} value={command} onChange={(e) => setCommand(e.target.value)} />
              </CommandRow>
            </div>
          </Console>
        </div>
      </Workspace>

      <StatusBar>
        <StatusText>Click objects or drag a box to select (Hold Ctrl to add, Shift to remove)</StatusText>
        {status && <StatusLabel>Design</StatusLabel>}
        <StatusValue>{status}</StatusValue>
        <StatusCorner>
          <Svg width="14" height="10" viewBox="0 0 14 10" opacity={status ? 1 : 0.4}>
            <path d="M1 1h7v8H1zM4 1v8M1 5h7" fill="none" stroke="#55534f" />
            <path d="M9 1q4 1 4 4t-4 4z" fill="#222" />
          </Svg>
        </StatusCorner>
      </StatusBar>

      <TaskBar>
        <TaskList>
          {tasks.map((task) => (
            <TaskButton key={task.label} $active={task.active}>
              <Glyph name={task.icon} />
              {task.label}
            </TaskButton>
          ))}
        </TaskList>
        <Svg width="16" height="19" viewBox="0 0 16 19" aria-hidden="true">
          <path d="M2 4 4 1h8l3 4v12H2z" fill="#d8dde2" stroke="#55606b" />
          <path d="M1 6h14l-1 12H2z" fill="#3d7cc9" stroke="#2a5b9b" />
          <path d="M4 5 6 2l3 3" fill="none" stroke="#4b5661" />
        </Svg>
        <Pager>
          <PagerDesk aria-label="Desktop 1">
            <Glyph name="designVision" />
          </PagerDesk>
        </Pager>
      </TaskBar>

      <Pointer $left={pointer.left} $top={pointer.top}>
        <Svg width="10" height="16" viewBox="0 0 10 16">
          <path d="M1 1v12l3-3 2 5 2-1-2-4h3z" fill="#111" stroke="#bbb" strokeWidth="0.500" />
        </Svg>
      </Pointer>
    </Desktop>
  );
}

const blockTasks = [
  { icon: 'terminal', label: ':/home/en...' },
  { icon: 'browser', label: '[asic new - ...' },
  { icon: 'folder', label: '[synopsys]' },
  { icon: 'folder', label: '[MSDAP]' },
  { icon: 'folder', label: '[asic_pictur...' },
  { icon: 'designVision', label: 'Design Visi...', active: true },
];

const symbolTasks = [
  { icon: 'terminal', label: ':/home/...' },
  { icon: 'browser', label: '[asic ne...' },
  { icon: 'folder', label: '[synopsys]' },
  { icon: 'folder', label: '[MSDAP]' },
  { icon: 'folder', label: '[asic_pic...' },
  { icon: 'designVision', label: 'Design ...', active: true },
  { icon: 'camera', label: 'Save Scr...' },
];

const blockLog = [
  "Current design is 'MSDAP_top'.",
  "Loading db file '/proj/cad/synopsys/synopsys-2016.lnx86_64_syn_vL-2016.03-SP3/libraries/syn/generic.sdb'",
];

function App() {
  return (
    <Sheet>
      <GlobalStyle />
      <Section>
        <Heading>RJ MEMORY BLOCK</Heading>
        <DesignVision
          design="MSDAP_top"
          title="Design Vision - TopLevel.1 (MSDAP_top) - [Schematic.1]"
          time="Wed Nov 16, 11:16 PM"
          view="Schematic.1"
          log={blockLog}
          tasks={blockTasks}
          pointer={{ left: '81.6%', top: '764px' }}
        >
          <TopLevelSchematic />
        </DesignVision>
      </Section>
      <Section>
        <Heading>RJ MEMORY SYMBOL</Heading>
        <DesignVision
          design="RJ"
          title="Design Vision - TopLevel.1 (RJ) - [Schematic.8]"
          time="Wed Nov 16, 11:28 PM"
          view="Schematic.8"
          tasks={symbolTasks}
          status="RJ"
          symbol
          pointer={{ left: '70%', top: '808px' }}
        >
          <SymbolSchematic />
        </DesignVision>
      </Section>
    </Sheet>
  );
}

export default App;
